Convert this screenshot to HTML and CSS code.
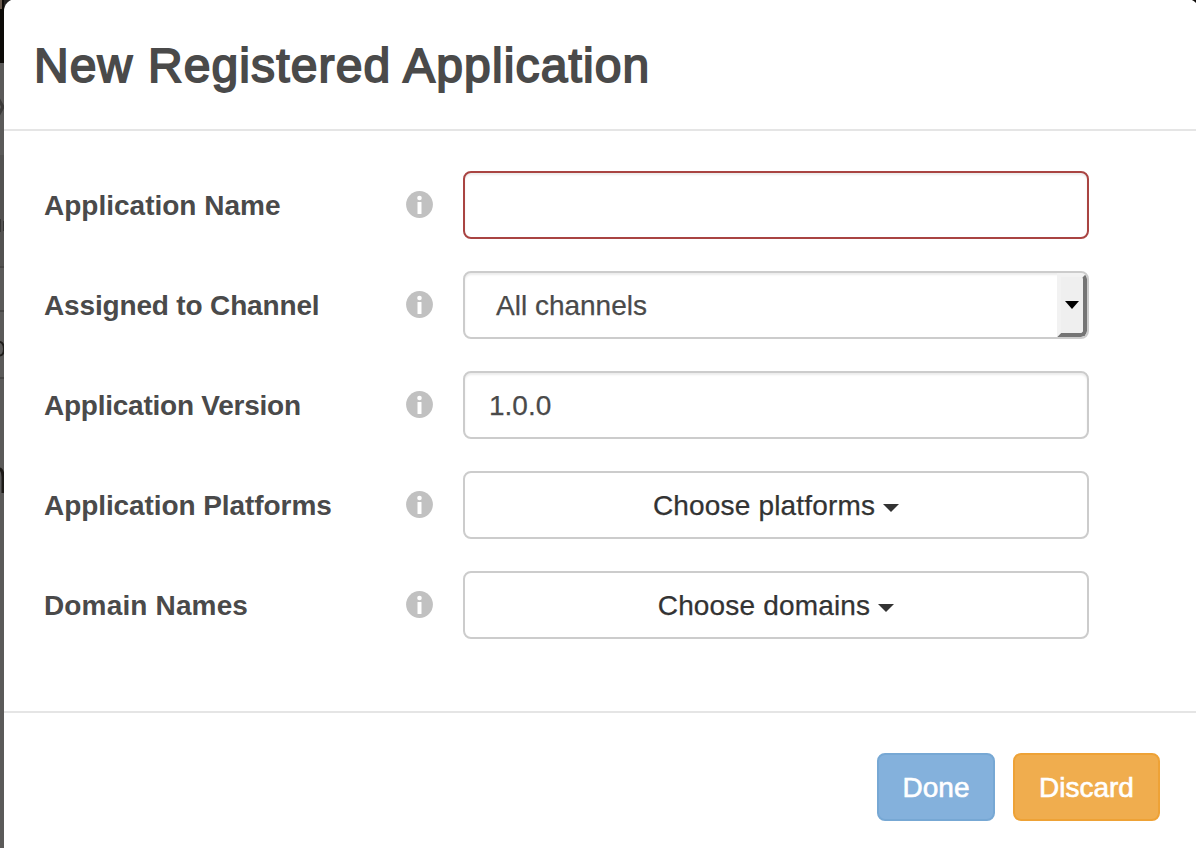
FILE: index.html
```html
<!DOCTYPE html>
<html lang="en">
<head>
<meta charset="utf-8">
<title>New Registered Application</title>
<link rel="stylesheet" href="styles.css">
</head>
<body>
<svg class="page-edge" width="16" height="848" viewBox="0 0 16 848" aria-hidden="true">
  <rect width="16" height="848" fill="#5b5a59"/>
  <rect width="16" height="63" fill="#0d0b08"/>
  <path d="M0 0h2v9H0z" fill="#6a5a4d"/>
  <path d="M4 0h10L4 9z" fill="#252322"/>
  <path d="M-2 98l5 9-5 9" fill="none" stroke="#3b3a39" stroke-width="3"/>
  <path d="M0 155h4v112H0z" fill="#535251"/>
  <path d="M0 219h1v13H0zM3 221h1v10H3z" fill="#363534"/>
  <path d="M0 266h4v2H0zM0 310h4v2H0zM0 377h4v2H0z" fill="#474645"/>
  <path d="M-3 342q7-1 7 7t-7 6" fill="none" stroke="#1f1d1b" stroke-width="2"/>
  <path d="M-4 469q7-2 7 8v16" fill="none" stroke="#1d1b18" stroke-width="3"/>
</svg>
<main class="modal">
  <header class="modal-header"><h1 class="modal-title">New Registered Application</h1></header>
  <form class="modal-body">
    <div class="row">
      <label class="label name">Application Name</label>
      <svg class="info" viewBox="0 0 27 27"><circle cx="13.5" cy="13.5" r="13.4"/><circle class="mark" cx="13.5" cy="7" r="2.3"/><rect class="mark" x="11.5" y="11" width="4" height="12" rx=".6"/></svg>
      <div class="field error"></div>
    </div>
    <div class="row">
      <label class="label channel">Assigned to Channel</label>
      <svg class="info" viewBox="0 0 27 27"><circle cx="13.5" cy="13.5" r="13.4"/><circle class="mark" cx="13.5" cy="7" r="2.3"/><rect class="mark" x="11.5" y="11" width="4" height="12" rx=".6"/></svg>
      <div class="field select"><span class="value">All channels</span><span class="select-button"><svg width="14" height="8" viewBox="0 0 14 8"><path d="M0 0h14L7 8z"/></svg></span></div>
    </div>
    <div class="row">
      <label class="label version">Application Version</label>
      <svg class="info" viewBox="0 0 27 27"><circle cx="13.5" cy="13.5" r="13.4"/><circle class="mark" cx="13.5" cy="7" r="2.3"/><rect class="mark" x="11.5" y="11" width="4" height="12" rx=".6"/></svg>
      <div class="field"><span class="value">1.0.0</span></div>
    </div>
    <div class="row">
      <label class="label platforms">Application Platforms</label>
      <svg class="info" viewBox="0 0 27 27"><circle cx="13.5" cy="13.5" r="13.4"/><circle class="mark" cx="13.5" cy="7" r="2.3"/><rect class="mark" x="11.5" y="11" width="4" height="12" rx=".6"/></svg>
      <div class="field dropdown"><span class="choice">Choose platforms</span><span class="caret"></span></div>
    </div>
    <div class="row">
      <label class="label domains">Domain Names</label>
      <svg class="info" viewBox="0 0 27 27"><circle cx="13.5" cy="13.5" r="13.4"/><circle class="mark" cx="13.5" cy="7" r="2.3"/><rect class="mark" x="11.5" y="11" width="4" height="12" rx=".6"/></svg>
      <div class="field dropdown"><span class="choice">Choose domains</span><span class="caret"></span></div>
    </div>
  </form>
  <footer class="modal-footer">
    <button class="btn done" type="button">Done</button>
    <button class="btn discard" type="button">Discard</button>
  </footer>
</main>
</body>
</html>
```

FILE: styles.css
```css
* { box-sizing: border-box; }
body {
  margin: 0;
  height: 848px;
  overflow: hidden;
  background: #0d0b08;
  color: #4a4a4a;
  font: 28px/40px "Liberation Sans", Arial, sans-serif;
}
.page-edge { position: absolute; left: 0; top: 0; }
.modal {
  position: relative;
  width: 1195px;
  height: 861px;
  margin: -1px 0 0 4px;
  background: #fff;
  border-radius: 12px;
}
.modal-header {
  height: 132px;
  padding: 37px 30px 0;
  border-bottom: 2px solid #e5e5e5;
}
.modal-title {
  margin: 0;
  font-size: 48px;
  line-height: 60px;
  font-weight: 400;
  letter-spacing: 1.13px;
  white-space: nowrap;
  -webkit-text-stroke: 1.8px #4a4a4a;
}
.modal-body {
  display: flex;
  flex-direction: column;
  gap: 32px;
  height: 580px;
  padding: 40px 0 0 40px;
}
.row {
  display: grid;
  grid-template-columns: 362px 57px 626px;
  align-items: center;
  height: 68px;
}
.label { padding-top: 2px; font-weight: 700; white-space: nowrap; }
.channel { letter-spacing: -.16px; }
.version { letter-spacing: -.24px; }
.platforms { letter-spacing: -.08px; }
.domains { letter-spacing: .15px; }
.info { width: 27px; height: 27px; margin-bottom: 1px; fill: #c1c1c1; }
.info .mark { fill: #fff; }
.field {
  display: flex;
  align-items: center;
  height: 68px;
  padding-left: 24px;
  border: 2px solid #ccc;
  border-radius: 8px;
  background: #fff;
  box-shadow: inset 0 2px 2px rgba(0, 0, 0, .075);
}
.value, .choice { padding-top: 2px; -webkit-text-stroke: .25px; }
.choice { letter-spacing: .17px; }
.error { border-color: #a94442; }
.select {
  justify-content: space-between;
  padding-left: 31px;
  overflow: hidden;
}
.select-button {
  display: flex;
  align-items: center;
  justify-content: center;
  width: 30px;
  height: 64px;
  background: #efefef;
  border: solid;
  border-width: 4px;
  border-color: #f2f2f2 #757575 #757575 #f2f2f2;
  border-radius: 0 6px 6px 0;
}
.select-button svg { flex: none; margin-top: -1px; }
.dropdown {
  justify-content: center;
  gap: 8px;
  padding: 0;
  color: #333;
  box-shadow: none;
}
.caret {
  margin-top: 5px;
  border: solid transparent;
  border-width: 8px 8px 0;
  border-top-color: #333;
}
.modal-footer {
  display: flex;
  justify-content: flex-end;
  gap: 18px;
  padding: 40px 39px 0 0;
  border-top: 2px solid #e5e5e5;
}
.btn {
  height: 68px;
  padding: 2px 0 0;
  border: 2px solid;
  border-radius: 8px;
  color: #fff;
  font: 28px/40px "Liberation Sans", Arial, sans-serif;
  -webkit-text-stroke: .6px #fff;
}
.done { width: 118px; background: #84b1dc; border-color: #77a8d4; }
.discard { width: 147px; background: #f0ad4e; border-color: #eea236; }
```
